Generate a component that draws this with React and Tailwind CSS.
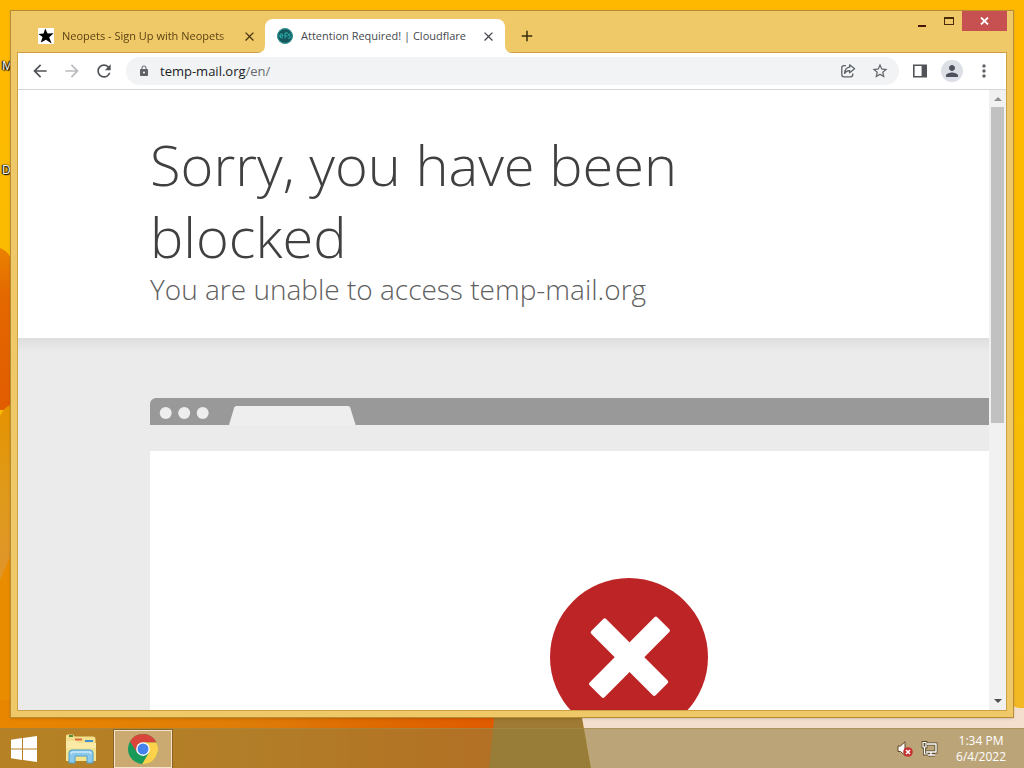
import React from "react";
import {
  MdAdd,
  MdArrowBack,
  MdArrowForward,
  MdClose,
  MdLock,
  MdMoreVert,
  MdPerson,
  MdRefresh,
  MdStarBorder,
} from "react-icons/md";

const Wallpaper = () => (
  <svg
    className="absolute inset-0 w-full h-full"
    viewBox="0 0 1024 768"
    preserveAspectRatio="none"
    aria-hidden="true"
  >
    <defs>
      <linearGradient id="base" x1="0" y1="0" x2="0" y2="1">
        <stop offset="0" stopColor="#ffb800" />
        <stop offset="0.5" stopColor="#f8bd00" />
        <stop offset="1" stopColor="#f2b82c" />
      </linearGradient>
      <linearGradient id="flame" x1="0" y1="0" x2="0" y2="1">
        <stop offset="0" stopColor="#ea8200" />
        <stop offset="0.3" stopColor="#e46800" />
        <stop offset="1" stopColor="#e25c00" />
      </linearGradient>
      <linearGradient id="petal" x1="0" y1="0" x2="0" y2="1">
        <stop offset="0" stopColor="#e59300" />
        <stop offset="0.3" stopColor="#df9a1c" />
        <stop offset="0.55" stopColor="#e0942a" />
        <stop offset="1" stopColor="#e07c00" />
      </linearGradient>
      <linearGradient id="floor" x1="0" y1="0" x2="1" y2="0">
        <stop offset="0" stopColor="#e98600" />
        <stop offset="0.5" stopColor="#de7c08" />
        <stop offset="0.8" stopColor="#de6600" />
        <stop offset="1" stopColor="#e05a00" />
      </linearGradient>
    </defs>
    <rect width="1024" height="768" fill="url(#base)" />
    <path d="M0 248 Q10 252 12 262 V410 H0 Z" fill="url(#flame)" />
    <path d="M0 416 Q4 407 12 404 V720 H0 Z" fill="url(#petal)" />
    <path d="M0 580 L12 552 V720 H0 Z" fill="#ea8c00" />
    <path d="M0 700 H500 Q494 735 490 768 H0 Z" fill="url(#floor)" />
    <path d="M496 700 H579 L591 768 H489 Z" fill="#9f7a34" />
    <path d="M579 700 H1005 Q1014 709 1024 708 V768 H591 Z" fill="#f4dfcf" />
  </svg>
);

const WindowControls = () => (
  <div className="flex self-start -mr-px">
    <button aria-label="Minimize" className="w-7 h-5 flex justify-center items-end pb-1">
      <span className="w-2 h-[2px] bg-[#4a1508]" />
    </button>
    <button aria-label="Maximize" className="w-[26px] h-5 flex justify-center items-center">
      <span className="w-[10px] h-2 border border-t-2 border-[#4a2a08]" />
    </button>
    <button
      aria-label="Close"
      className="w-[45px] h-5 bg-[#c75050] text-white flex items-center justify-center"
    >
      <svg width="9" height="8" viewBox="0 0 9 8" stroke="currentColor" strokeWidth="1.8">
        <path d="M1 0.5 L8 7.5 M8 0.5 L1 7.5" />
      </svg>
    </button>
  </div>
);

const TabStrip = () => (
  <div className="flex h-[42px] shrink-0">
    <div className="flex items-end flex-1 min-w-0">
      <div className="flex items-center w-[247px] h-[34px] pl-5 pr-[7px] text-[#5c4313]">
        <span className="w-4 h-4 bg-white shrink-0">
          <svg viewBox="0 0 16 16" fill="#000">
            <path d="M7.2 0.5 L9.6 5.4 L15.6 5.2 L11.2 9.2 L13.6 15.4 L8 11.8 L2.8 14.6 L4.6 9 L0.4 6 L5.6 5.6 Z" />
          </svg>
        </span>
        <span className="ml-2 flex-1 min-w-0 overflow-hidden whitespace-nowrap [mask-image:linear-gradient(to_right,#000_92%,transparent)]">
          Neopets - Sign Up with Neopets
        </span>
        <button aria-label="Close Neopets tab" className="ml-2 w-4 h-4 text-[#4a3610]">
          <MdClose className="w-[15px] h-[15px]" />
        </button>
      </div>
      <div className="relative flex items-center w-60 h-[34px] px-3 pr-2 rounded-t-lg bg-white text-[#45494d]">
        <svg className="absolute bottom-0 -left-2 w-2 h-2" viewBox="0 0 8 8" fill="#fff">
          <path d="M8 0 V8 H0 Q8 8 8 0" />
        </svg>
        <svg className="absolute bottom-0 -right-2 w-2 h-2" viewBox="0 0 8 8" fill="#fff">
          <path d="M0 0 V8 H8 Q0 8 0 0" />
        </svg>
        <svg className="w-4 h-4 shrink-0" viewBox="0 0 16 16" fill="none">
          <circle cx="8" cy="8" r="7.8" fill="#17545c" />
          <circle cx="8" cy="8" r="7.2" stroke="#249a94" />
          <path
            d="M2.8 8 H6 Q6 5.8 4.4 5.8 Q2.8 5.8 2.8 8 Q2.8 10.4 5.8 10 M8 10.5 V5 H11 M8 8 H10.6 M13.6 6.2 Q11 5.4 11.2 7 Q13.8 8 13.4 9.6 Q12.6 11 10.8 10"
            stroke="#29b8ae"
            strokeWidth="1"
          />
        </svg>
        <span className="ml-2 flex-1 min-w-0 overflow-hidden whitespace-nowrap">
          Attention Required! | Cloudflare
        </span>
        <button aria-label="Close Cloudflare tab" className="w-4 h-4">
          <MdClose className="w-[15px] h-[15px]" />
        </button>
      </div>
      <button aria-label="New tab" className="ml-[13px] mb-2 w-5 h-[18px] text-[#3a2c0e]">
        <MdAdd className="w-[18px] h-[18px] stroke-current" />
      </button>
    </div>
    <WindowControls />
  </div>
);

const Toolbar = () => (
  <div className="flex items-center h-[37px] shrink-0 px-3 bg-white border-b border-[#d5d7d9] text-[#5f6368]">
    <button aria-label="Back" className="w-5 h-5">
      <MdArrowBack className="w-5 h-5 text-[#4f5357]" />
    </button>
    <button aria-label="Forward" className="ml-3 w-5 h-5" disabled>
      <MdArrowForward className="w-5 h-5 text-[#b9bbbe]" />
    </button>
    <button aria-label="Reload" className="ml-3 w-5 h-5">
      <MdRefresh className="w-5 h-5 text-[#4f5357]" />
    </button>
    <div className="ml-3 flex-1 min-w-0 flex items-center h-7 px-3 pr-[10px] rounded-full bg-[#f1f3f4]">
      <MdLock className="w-3 h-[14px]" />
      <a href="#address" className="ml-[10px] flex-1 text-[13px] leading-5 text-[#666a6e]">
        <span className="text-[#202124]">temp-mail.org</span>/en/
      </a>
      <button aria-label="Share this page" className="w-4 h-4">
        <svg viewBox="0 0 16 16" fill="none" stroke="currentColor" strokeWidth="1.3">
          <path d="M6 2.6 H4 Q1.8 2.6 1.8 4.8 V11.6 Q1.8 13.8 4 13.8 H10.6 Q12.8 13.8 12.8 11.6 V10.4" />
          <path
            d="M9.6 1.8 L14.6 5.8 L9.6 9.8 V7.6 Q6.4 7.4 4.6 10.4 Q4.8 5 9.6 4.2 Z"
            strokeLinejoin="round"
          />
        </svg>
      </button>
      <button aria-label="Bookmark this tab" className="ml-[15px] w-[18px] h-[18px]">
        <MdStarBorder className="w-[18px] h-[18px]" />
      </button>
    </div>
    <button aria-label="Side panel" className="ml-[13px] w-4 h-4">
      <svg viewBox="0 0 16 16">
        <path d="M1 1.5 H15 V14.5 H1 Z M2.6 3.1 V12.9 H9.6 V3.1 Z" fill="#505357" fillRule="evenodd" />
      </svg>
    </button>
    <button
      aria-label="Profile"
      className="ml-[13px] w-[22px] h-[22px] rounded-full bg-[#dcdfe5] flex items-center justify-center"
    >
      <MdPerson className="w-[18px] h-[18px] text-[#4d525c]" />
    </button>
    <button aria-label="Menu" className="ml-[11px] w-5 h-5">
      <MdMoreVert className="w-5 h-5" />
    </button>
  </div>
);

const ErrorPage = () => (
  <main className="flex-1 min-w-0 overflow-hidden bg-[#ebebeb]">
    <header className="bg-white pl-[132px] pt-[38px] pb-8 font-light">
      <h1 className="max-w-[600px] text-[56px] leading-[72px] text-[#404040]">
        Sorry, you have been blocked
      </h1>
      <h2 className="text-[28px] leading-[34px] text-[#606060]">
        You are unable to access temp-mail.org
      </h2>
    </header>
    <div className="pl-[132px] pt-[60px] bg-linear-to-b from-[#dedede] to-[#ebebeb] to-[14px]">
      <section className="w-[958px]">
        <div className="flex h-[27px] rounded-t-md bg-[#999999]">
          <svg width="220" height="27" viewBox="0 0 220 27" fill="#eeeeee">
            <circle cx="15.7" cy="15" r="6" />
            <circle cx="34.2" cy="15" r="6" />
            <circle cx="52.7" cy="15" r="6" />
            <path d="M79 27 L84.2 9.6 Q84.8 8 86.4 8 H198 Q199.6 8 200.2 9.6 L205.6 27 Z" />
          </svg>
        </div>
        <div className="mt-[26px] pt-[127px] pb-40 flex justify-center bg-white">
          <svg width="158" height="158" viewBox="0 0 158 158" role="img" aria-label="Blocked">
            <circle cx="79" cy="79" r="79" fill="#bd2426" />
            <g fill="#fff">
              <rect x="34" y="68.5" width="91" height="21" rx="2" transform="rotate(45 79.3 79)" />
              <rect x="31.5" y="68.8" width="96" height="21" rx="2" transform="rotate(-45.2 79.4 79.3)" />
            </g>
          </svg>
        </div>
      </section>
    </div>
  </main>
);

const Scrollbar = () => (
  <div className="w-[17px] shrink-0 flex flex-col items-center bg-[#f1f1f1]">
    <svg className="w-4 h-[17px] shrink-0" viewBox="0 0 16 17" fill="#909090">
      <path d="M4 11 L8 7 L12 11 Z" />
    </svg>
    <div className="flex-1 w-full px-[2px]">
      <div className="w-[13px] h-[54%] bg-[#c1c1c1]" />
    </div>
    <svg className="w-4 h-[17px] shrink-0" viewBox="0 0 16 17" fill="#505050">
      <path d="M4 6 L8 10 L12 6 Z" />
    </svg>
  </div>
);

const BrowserWindow = () => (
  <div className="relative flex-1 min-h-0 flex flex-col m-[10px] px-[7px] pb-[7px] border border-[#b98b33] bg-[#efc868] text-[11px] shadow-sm">
    <TabStrip />
    <div className="flex-1 min-h-0 flex flex-col outline outline-[#cf9f45]">
      <Toolbar />
      <div className="flex-1 min-h-0 flex">
        <ErrorPage />
        <Scrollbar />
      </div>
    </div>
  </div>
);

const ExplorerIcon = () => (
  <svg width="32" height="30" viewBox="0 0 32 30">
    <path d="M1 2 Q1 0.5 2.5 0.5 H8 L9.5 2.5 H28 Q30.5 2.5 30.5 5 V27 H1 Z" fill="#f3df8c" />
    <path d="M4 2 H8" stroke="#4f8a3a" strokeWidth="2" />
    <path d="M10 5.5 H17" stroke="#d86a3c" strokeWidth="2" />
    <path d="M20 7 H28" stroke="#3f92c9" strokeWidth="2" />
    <path d="M1 7 H11 L13 9 H31 V27 H1 Z" fill="#fbeaa6" />
    <path d="M1 14 H31 V27 H1 Z" fill="#f5e48f" />
    <path
      d="M4 29 V19 Q4 16 7 16 H25 Q28 16 28 19 V29 H22 V22 H10 V29 Z"
      fill="#8cc9ea"
      stroke="#4b9fd0"
    />
    <path d="M6 20 Q6 18 8 18 H24 Q26 18 26 20" fill="none" stroke="#cdeafa" strokeWidth="1.4" />
  </svg>
);

const ChromeIcon = () => (
  <svg width="30" height="30" viewBox="0 0 48 48">
    <circle cx="24" cy="24" r="24" fill="#1a9a58" />
    <path d="M33.5 29.5 L22.8 48 A24 24 0 0 0 45.3 13 H24 Z" fill="#fcd14b" />
    <path d="M3.2 12 A24 24 0 0 1 45.3 13 H24 L14.5 29.5 Z" fill="#d9453a" />
    <circle cx="24" cy="24" r="11" fill="#fff" />
    <circle cx="24" cy="24" r="8.8" fill="#4583ec" />
  </svg>
);

const TrayIcons = () => (
  <div className="flex items-center gap-2">
    <button aria-label="Volume muted">
      <svg width="16" height="16" viewBox="0 0 16 16">
        <path d="M1 5 H3.5 L8 0.8 V14.5 L3.5 10.5 H1 Z" fill="#fff" stroke="#5b4526" strokeWidth="1" />
        <circle cx="11" cy="11" r="4.8" fill="#c53232" />
        <path d="M9 9 L13 13 M13 9 L9 13" stroke="#fff" strokeWidth="1.5" />
      </svg>
    </button>
    <button aria-label="Network">
      <svg width="17" height="16" viewBox="0 0 17 16" fill="none">
        <path d="M6 3 H15 V11 H5 M10 11 V14 M7 14 H14" stroke="#57462a" strokeWidth="3" />
        <path d="M2 1.5 H5 V6 H2 Z M3.5 6 V13 H7" stroke="#57462a" strokeWidth="2.8" />
        <path d="M6 3 H15 V11 H5 M10 11 V14 M7 14 H14" stroke="#fff" strokeWidth="1.4" />
        <path d="M2 1.5 H5 V6 H2 Z M3.5 6 V13 H7" stroke="#fff" strokeWidth="1.2" />
      </svg>
    </button>
  </div>
);

const Taskbar = () => (
  <footer className="relative flex items-center h-10 shrink-0 pl-[10px] pr-[18px] bg-[#957f3e]/60 border-t border-[#a78845]/60 text-white">
    <button aria-label="Start">
      <svg width="28" height="26" viewBox="0 0 28 26" fill="#fff">
        <path d="M1 3.7 L12 2.1 V12.5 H1 Z M13 2 L27 0 V12.5 H13 Z M1 13.5 H12 V23.9 L1 22.3 Z M13 13.5 H27 V26 L13 24 Z" />
      </svg>
    </button>
    <button aria-label="File Explorer" className="ml-[27px]">
      <ExplorerIcon />
    </button>
    <button
      aria-label="Google Chrome"
      className="ml-[17px] w-[58px] h-[38px] flex items-center justify-center border border-[#f3e5cb] bg-[#d3b88c]/75 outline outline-[#70501c]/60"
    >
      <ChromeIcon />
    </button>
    <div className="ml-auto flex items-center gap-[18px]">
      <TrayIcons />
      <time className="text-center text-[12px] leading-4">
        1:34 PM
        <br />
        6/4/2022
      </time>
    </div>
  </footer>
);

const desktopLabel =
  "absolute left-[2px] text-[12px] leading-4 text-white [text-shadow:1px_1px_1px_#000,0_0_2px_#000,-1px_0_1px_#000]";

export default function App() {
  return (
    <div className="relative h-screen flex flex-col overflow-hidden font-['Open_Sans','Noto_Sans',sans-serif]">
      <Wallpaper />
      <span className={`${desktopLabel} top-[58px]`}>M</span>
      <span className={`${desktopLabel} top-[162px]`}>D</span>
      <BrowserWindow />
      <Taskbar />
    </div>
  );
}
